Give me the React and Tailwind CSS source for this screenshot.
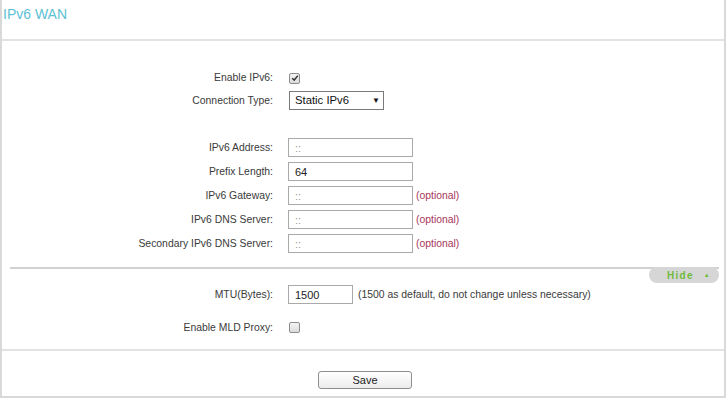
export default function App() {
    const label = "w-[271px] shrink-0 text-right text-[10.4px] text-[#3a3a3a]";
    const input = "h-[19px] border border-[#a9a9a9] bg-white px-[6px] text-[11px] text-[#222] outline-none placeholder:text-[#9a9a9a]";
    const optional = <span className="ml-[3px] text-[10.4px] text-[#a8365a]">(optional)</span>;

    return (
        <div className="w-[726px] h-[398px] bg-white font-['Liberation_Sans',Arial,sans-serif]">
            <div className="h-[398px] flex flex-col border-x-2 border-b-2 border-[#d9d9d9]">
                <header className="h-[41px] shrink-0 border-b-2 border-[#e2e2e2] pl-[1px] pt-[6px] text-[14px] leading-[16px] text-[#5cc1d3]">
                    IPv6 WAN
                </header>

                <div className="flex flex-col">
                    <div className="mt-[27px] flex h-[20px] items-center">
                        <span className={label}>Enable IPv6:</span>
                        <span className="ml-[16px] flex h-[11px] w-[11px] items-center justify-center rounded-[2px] border border-[#8c8c8c] bg-gradient-to-b from-[#f4f4f4] to-[#dcdcdc]">
                            <svg viewBox="0 0 10 10" className="h-[8px] w-[8px]">
                                <path d="M1.5 5.2 L4 7.6 L8.6 2" fill="none" stroke="#333" strokeWidth="1.8" />
                            </svg>
                        </span>
                    </div>

                    <div className="mt-[3px] flex h-[19px] items-center">
                        <span className={label}>Connection Type:</span>
                        <div className="ml-[16px] flex h-[19px] w-[95px] items-center justify-between border border-[#7a7a7a] bg-white pl-[5px] pr-[3px] text-[11.3px] text-[#111]">
                            <span>Static IPv6</span>
                            <span className="text-[8px]">▼</span>
                        </div>
                    </div>

                    <div className="mt-[28px] flex flex-col gap-[5px]">
                        <div className="flex h-[19px] items-center">
                            <span className={label}>IPv6 Address:</span>
                            <input className={`${input} ml-[15px] w-[125px]`} placeholder="::" />
                        </div>
                        <div className="flex h-[19px] items-center">
                            <span className={label}>Prefix Length:</span>
                            <input className={`${input} ml-[15px] w-[125px]`} defaultValue="64" />
                        </div>
                        <div className="flex h-[19px] items-center">
                            <span className={label}>IPv6 Gateway:</span>
                            <input className={`${input} ml-[15px] w-[125px]`} placeholder="::" />
                            {optional}
                        </div>
                        <div className="flex h-[19px] items-center">
                            <span className={label}>IPv6 DNS Server:</span>
                            <input className={`${input} ml-[15px] w-[125px]`} placeholder="::" />
                            {optional}
                        </div>
                        <div className="flex h-[19px] items-center">
                            <span className={label}>Secondary IPv6 DNS Server:</span>
                            <input className={`${input} ml-[15px] w-[125px]`} placeholder="::" />
                            {optional}
                        </div>
                    </div>

                    <div className="mt-[14px] ml-[8px] mr-[5px]">
                        <div className="h-[2px] bg-[#d2d2d2]" />
                        <div className="-mt-[2px] flex justify-end">
                            <button className="flex h-[16px] w-[70px] items-center justify-end gap-[10px] rounded-[8px] bg-[#d6d6d6] pr-[8px] text-[10px] font-bold tracking-[1.3px] text-[#6fbb3c]">
                                <span>Hide</span>
                                <span className="text-[6px]">▲</span>
                            </button>
                        </div>
                    </div>

                    <div className="mt-[2px] flex h-[19px] items-center">
                        <span className={label}>MTU(Bytes):</span>
                        <input className={`${input} ml-[15px] w-[65px]`} defaultValue="1500" />
                        <span className="ml-[5px] text-[10.4px] text-[#3a3a3a]">(1500 as default, do not change unless necessary)</span>
                    </div>

                    <div className="mt-[14px] flex h-[19px] items-center">
                        <span className={label}>Enable MLD Proxy:</span>
                        <span className="ml-[16px] h-[11px] w-[11px] rounded-[2px] border border-[#8c8c8c] bg-gradient-to-b from-[#f4f4f4] to-[#dcdcdc]" />
                    </div>
                </div>

                <div className="mt-[12px] h-[2px] bg-[#e2e2e2]" />

                <div className="mt-[20px] flex justify-center pl-[4px]">
                    <button className="h-[18px] w-[94px] rounded-[3px] border border-[#8e8e8e] bg-gradient-to-b from-white to-[#ececec] text-[11px] text-[#222]">
                        Save
                    </button>
                </div>
            </div>
        </div>
    );
}
